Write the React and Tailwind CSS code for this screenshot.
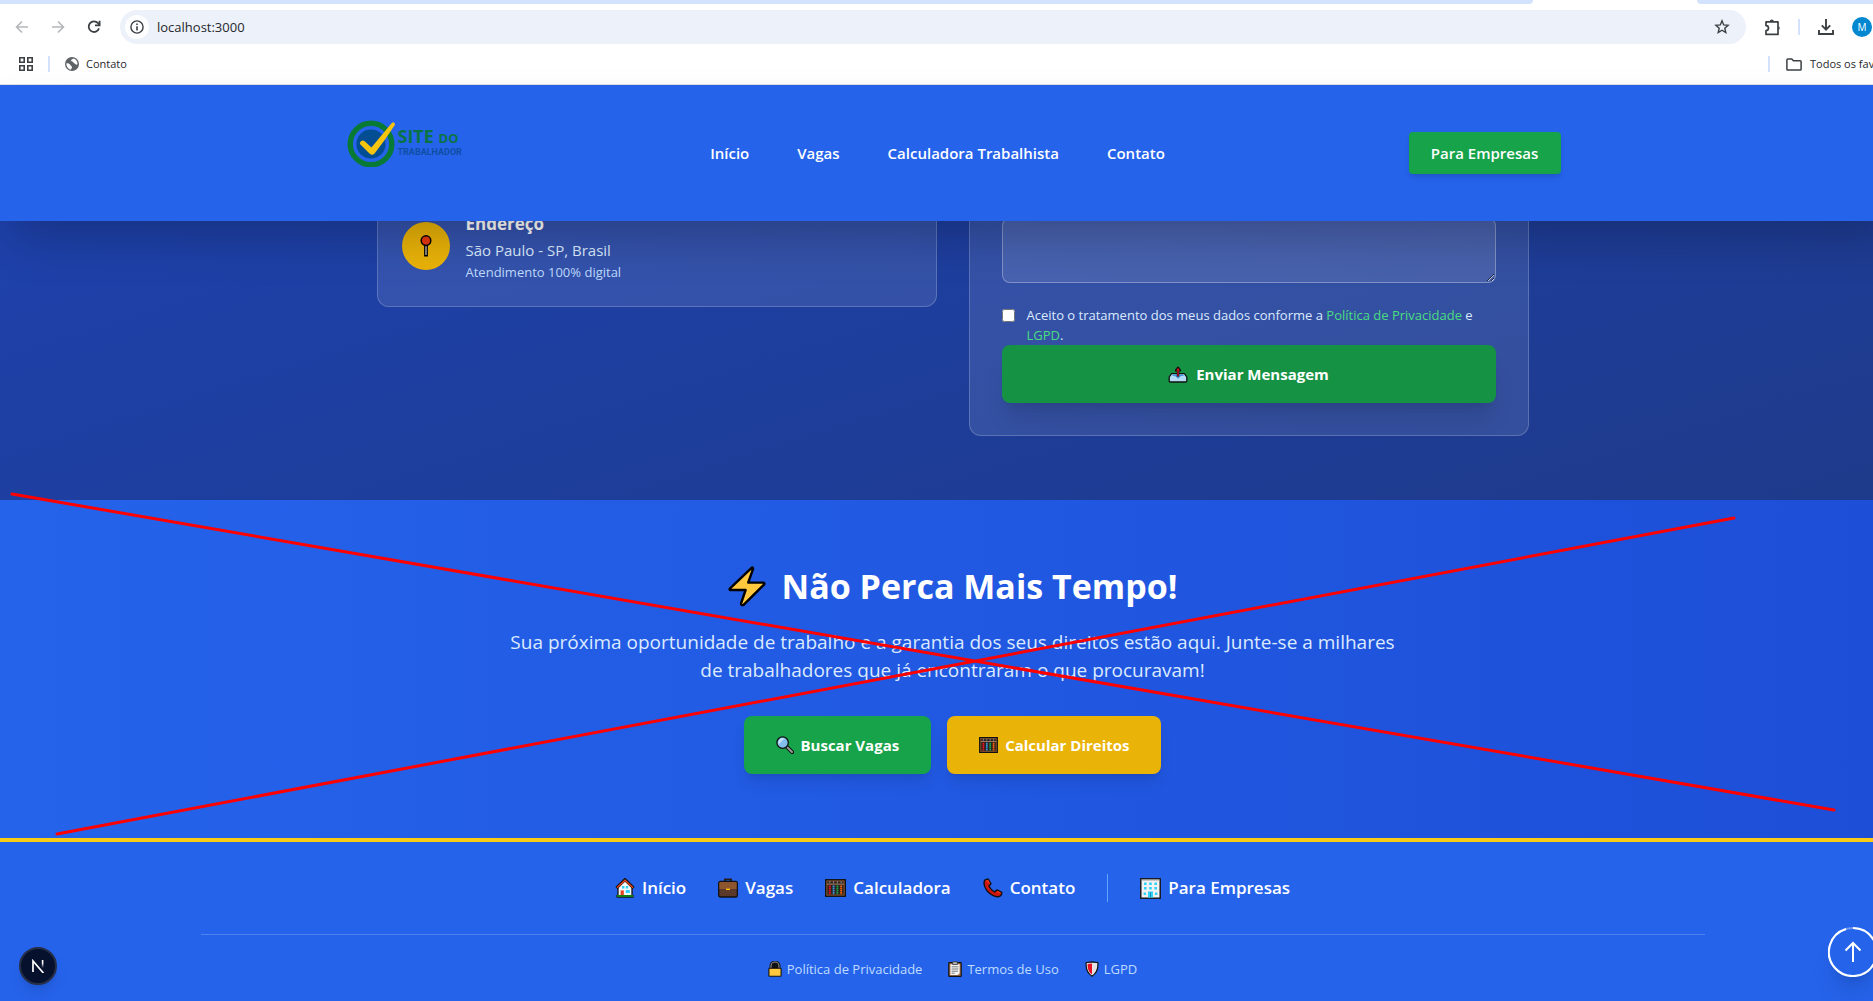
import React from "react";

/* ---------- toolbar icons ---------- */

const ArrowIcon = ({ flip }) => (
  <svg viewBox="0 0 14 14" className={flip ? "size-[14px] rotate-180" : "size-[14px]"} fill="none" stroke="#b4b6b8" strokeWidth="1.6" aria-hidden="true">
    <path d="M13 7H2M7 1.5 1.5 7 7 12.5" />
  </svg>
);

const ReloadIcon = () => (
  <svg viewBox="0 0 14 14" className="size-[14px]" fill="none" stroke="#3c4043" strokeWidth="1.8" aria-hidden="true">
    <path d="M12 8.4A5.3 5.3 0 1 1 11 3.2L12.4 5" />
    <path d="M12.6 0.8V5.4H8" />
  </svg>
);

const InfoIcon = () => (
  <svg viewBox="0 0 14 14" className="size-[14px]" fill="none" stroke="#3c4043" strokeWidth="1.4" aria-hidden="true">
    <circle cx="7" cy="7" r="6.1" />
    <path d="M7 6.2V10.4M7 3.6V5.1" strokeWidth="1.6" />
  </svg>
);

const StarIcon = () => (
  <svg viewBox="0 0 16 16" className="size-4" fill="none" stroke="#3c4043" strokeWidth="1.4" strokeLinejoin="miter" aria-hidden="true">
    <path d="M8 1.8 9.7 5.9 14.1 6.3 10.8 9.2 11.8 13.5 8 11.2 4.2 13.5 5.2 9.2 1.9 6.3 6.3 5.9Z" />
  </svg>
);

const PuzzleIcon = () => (
  <svg viewBox="0 0 17 17" className="size-[17px]" fill="none" aria-hidden="true">
    <path d="M2 2.8H14V15.4H2V11.6A2.4 2.4 0 0 0 2 6.6Z" stroke="#3c4043" strokeWidth="1.7" strokeLinejoin="round" />
    <path d="M5.8 2.4A2 2 0 0 1 9.8 2.4ZM14.4 7.2A2 2 0 0 1 14.4 11Z" fill="#3c4043" />
  </svg>
);

const DownloadIcon = () => (
  <svg viewBox="0 0 16 16" className="size-4" fill="none" stroke="#3c4043" strokeWidth="1.9" aria-hidden="true">
    <path d="M8 0V10.5M3.8 6.4 8 10.6 12.2 6.4M1 11V15H15V11" />
  </svg>
);

const AppsIcon = () => (
  <svg viewBox="0 0 14 14" className="size-[14px]" fill="none" stroke="#3c4043" strokeWidth="1.6" aria-hidden="true">
    <path d="M.8.8H5.2V5.2H.8ZM8.8.8H13.2V5.2H8.8ZM.8 8.8H5.2V13.2H.8ZM8.8 8.8H13.2V13.2H8.8Z" />
  </svg>
);

const GlobeIcon = () => (
  <svg viewBox="0 0 14 14" className="size-[14px]" aria-hidden="true">
    <circle cx="7" cy="7" r="7" fill="#5f6368" />
    <path d="M1.4 6.2C3 6 4.8 6.6 5.2 7.8S7 9.2 7 10.2 6 11.4 6.2 12.6C3 12.2 1.2 9.4 1.4 6.2ZM8 1.5C7.4 2.6 6 2.6 6 3.6S8 4.6 8.4 5.4 10.2 6.6 11 7.4 12.2 7.6 12.5 7C12.6 4 10.6 1.8 8 1.5Z" fill="#fff" />
  </svg>
);

const FolderIcon = () => (
  <svg viewBox="0 0 16 13" className="h-[13px] w-4" fill="none" stroke="#3c4043" strokeWidth="1.5" strokeLinejoin="round" aria-hidden="true">
    <path d="M.9 1.9Q.9.9 1.9.9H5.8L7.4 2.7H14.2Q15.1 2.7 15.1 3.6V11.2Q15.1 12.1 14.2 12.1H1.8Q.9 12.1.9 11.2Z" />
  </svg>
);

/* ---------- pictograms used in the page ---------- */

const Pin = () => (
  <svg viewBox="0 0 24 24" className="size-6" stroke="#000" aria-hidden="true">
    <path d="M10.8 11V21.8H13.2V11Z" fill="#fff" strokeWidth="1.4" />
    <circle cx="12" cy="6.6" r="4.8" fill="#e8380d" strokeWidth="1.5" />
  </svg>
);

const Outbox = () => (
  <svg viewBox="0 0 20 18" className="h-[18px] w-5" strokeLinejoin="round" aria-hidden="true">
    <path d="M1.2 12 3.6 8.6H16.4L18.8 12V15.8Q18.8 17 17.6 17H2.4Q1.2 17 1.2 15.8Z" fill="#b4dcf5" stroke="#111" strokeWidth="1.3" />
    <path d="M4 10.6 5 9.4H15L16 10.6 12.6 11.2 10 13.8 7.4 11.2Z" fill="#3a96dd" />
    <path d="M10 11.4V4.4M8 5.4 10 2.8 12 5.4Z" fill="#e81224" stroke="#111" strokeWidth="2.4" />
    <path d="M10 11.6V4.4" stroke="#e81224" strokeWidth="1.2" />
    <path d="M8.3 5.4 10 3.1 11.7 5.4Z" fill="#e81224" />
  </svg>
);

const Bolt = () => (
  <svg viewBox="0 0 38 41" className="h-[41px] w-[38px]" aria-hidden="true">
    <path d="M23.6 1.8 1.8 22.6Q1.2 23.8 2.6 24H17.6L13 37.6Q13 39.8 15.6 38.8L36.2 18.4Q36.8 16.8 35 16.6H20.2L25 3.2Q25.2 1 23.6 1.8Z" fill="#ffc83d" stroke="#000" strokeWidth="2.4" strokeLinejoin="round" />
  </svg>
);

const Magnifier = () => (
  <svg viewBox="0 0 18 18" className="size-[18px]" stroke="#111" aria-hidden="true">
    <path d="M10.6 10.6 16.2 16.2" strokeWidth="4" strokeLinecap="round" />
    <path d="M11.6 11.6 16 16" stroke="#9b9ca0" strokeWidth="2" strokeLinecap="round" />
    <circle cx="6.6" cy="6.6" r="5.7" fill="#83beec" strokeWidth="1.3" />
    <path d="M2.6 8.4A4.6 4.6 0 0 1 8.4 2.4Z" fill="#c5e4fa" stroke="none" />
  </svg>
);

const Abacus = ({ className }) => (
  <svg viewBox="0 0 20 17" className={className} fill="none" aria-hidden="true">
    <rect x=".7" y=".7" width="18.6" height="15.6" fill="#2b211d" stroke="#111" strokeWidth="1.4" />
    <rect x="1.8" y="1.8" width="16.4" height="13.4" stroke="#8e562e" strokeWidth="1" />
    <path d="M2 4.8H18" stroke="#b58a6a" strokeWidth=".9" />
    <g strokeWidth="1.8" strokeDasharray="1.6 .5">
      <path d="M4.6 6V14.8" stroke="#e81224" />
      <path d="M8.2 6V14.8" stroke="#3a96dd" />
      <path d="M11.8 6V14.8" stroke="#16a34a" />
      <path d="M15.4 6V14.8" stroke="#f7630c" />
    </g>
    <path d="M4.6 2V4M8.2 2V4M11.8 2V4M15.4 2V4" stroke="#9b9ca0" strokeWidth=".8" />
  </svg>
);

const House = () => (
  <svg viewBox="0 0 20 20" className="size-5" aria-hidden="true">
    <path d="M3 9V18.6H17V9L10 2Z" fill="#f5f5f5" stroke="#111" strokeWidth="1.3" />
    <path d="M1.4 10 10 1.6 18.6 10" fill="none" stroke="#111" strokeWidth="3" />
    <path d="M2 9.8 10 2.2 18 9.8" fill="none" stroke="#e8421f" strokeWidth="1.4" />
    <path d="M7 8H9.4V10.4H7ZM10.8 8H13.2V10.4H10.8ZM10.8 12H14.8V15H10.8Z" fill="#31d2f7" />
    <path d="M5.6 12.4H8.8V18H5.6Z" fill="#e8421f" />
    <path d="M1.4 18.3H18.6" stroke="#111" strokeWidth="2.6" />
    <path d="M2 18H18" stroke="#16c60c" strokeWidth="1.2" />
  </svg>
);

const Briefcase = () => (
  <svg viewBox="0 0 20 20" className="size-5" aria-hidden="true">
    <path d="M7 4V1.4H13V4" fill="none" stroke="#241a16" strokeWidth="1.8" />
    <rect x=".7" y="3.4" width="18.6" height="15.6" rx="1.6" fill="#5b3a2c" stroke="#111" strokeWidth="1.3" />
    <path d="M1.4 4.8Q1.4 4 2.4 4H17.6Q18.6 4 18.6 4.8V11H1.4Z" fill="#8e562e" />
    <path d="M8 11.3H12" stroke="#ffc400" strokeWidth="1.4" />
  </svg>
);

const Phone = () => (
  <svg viewBox="0 0 20 20" className="size-5" aria-hidden="true">
    <path d="M2 1.9 5.2 1 8 5.8 5.9 8Q7.6 11.8 11.6 14L14 11.9 18.8 14.4Q19 18.2 14.8 18.8 9.6 18.6 4.9 13.8.4 8 1.2 3.6Z" fill="#d3150f" stroke="#111" strokeWidth="1.4" strokeLinejoin="round" />
    <path d="M3 3.2 4.8 2.4 6.6 5.7M14.2 13.4 17.4 15" fill="none" stroke="#f03a17" strokeWidth="1.2" />
  </svg>
);

const Office = () => (
  <svg viewBox="0 0 21 21" className="size-[21px]" aria-hidden="true">
    <rect x=".8" y=".8" width="19.4" height="19.4" fill="#f2f2f2" stroke="#111" strokeWidth="1.4" />
    <path d="M1.4 2H19.6" stroke="#9b9ca0" />
    <path d="M4 4.4H6.6V7H4ZM9.2 4.4H11.8V7H9.2ZM14.4 4.4H17V7H14.4ZM4 9H6.6V11.6H4ZM9.2 9H11.8V11.6H9.2ZM14.4 9H17V11.6H14.4ZM3.6 14.4H6V17H3.6ZM15 14.4H17.4V17H15ZM8 13.4H13V19.5H8Z" fill="#31d2f7" />
    <path d="M10.5 14V19.5" stroke="#1492c8" />
  </svg>
);

const Lock = () => (
  <svg viewBox="0 0 14 16" className="h-4 w-[14px]" aria-hidden="true">
    <path d="M3 8V5A4 4 0 0 1 11 5V8" fill="#111" stroke="#111" strokeWidth="3" />
    <path d="M3 8V5A4 4 0 0 1 11 5V8" fill="#111" stroke="#8d8f93" strokeWidth="1.1" />
    <rect x=".9" y="7.2" width="12.2" height="8" rx=".8" fill="#ffc83d" stroke="#111" strokeWidth="1.1" />
  </svg>
);

const Clipboard = () => (
  <svg viewBox="0 0 14 16" className="h-4 w-[14px]" aria-hidden="true">
    <rect x=".8" y="1.6" width="12.4" height="13.8" rx=".6" fill="#a9744f" stroke="#111" strokeWidth="1.2" />
    <path d="M2.4 3.2H11.6V12.2L9.8 14H2.4Z" fill="#f4f4f4" />
    <path d="M4.6.9H9.4V3.4H4.6Z" fill="#c8c9cb" stroke="#333" strokeWidth=".9" />
    <path d="M3.6 5.8H10.4M3.6 8H10.4M3.6 10.2H10M3.6 12.2H6.6" stroke="#77787b" />
  </svg>
);

const Shield = () => (
  <svg viewBox="0 0 14 16" className="h-4 w-[14px]" aria-hidden="true">
    <path d="M7 .9C9 1.2 11 1.4 12.8 1.6 13.4 7.6 11.6 12.4 7 15.2 2.4 12.4.6 7.6 1.2 1.6 3 1.4 5 1.2 7 .9Z" fill="#e4e4e6" stroke="#111" strokeWidth="1.2" />
    <path d="M7 2.4C5.6 2.6 4 2.8 2.6 2.9 2.4 7.6 3.8 11.2 7 13.5Z" fill="#e81224" />
  </svg>
);

const Logo = () => (
  <a href="#inicio" aria-label="Site do Trabalhador" className="mb-5 flex w-[122px] items-center pl-[2px]">
    <svg viewBox="0 0 48 48" className="size-12 shrink-0" aria-hidden="true">
      <circle cx="24" cy="25" r="20.8" fill="none" stroke="#087a35" strokeWidth="5.4" />
      <circle cx="24" cy="25" r="14.6" fill="#034e93" />
      <path d="M13 23.4Q15 20 18 22.6L24.4 28.4 44.6 4.2Q47.6 1.8 48 5.8 38 21.4 27.6 34.4 24.8 37.2 22 34L13.4 25.6Q12.6 24.8 13 23.4Z" fill="#f7c410" />
    </svg>
    <span className="ml-[3px] flex flex-col font-bold">
      <span className="whitespace-nowrap text-[18px] leading-4 text-[#0a7345]">
        SITE <span className="text-[13px]">DO</span>
      </span>
      <span className="font-['Liberation_Sans_Narrow','Roboto',sans-serif] text-[9px] leading-3 text-[#0f4fa3]">TRABALHADOR</span>
    </span>
  </a>
);

/* ---------- browser frame ---------- */

function BrowserBar() {
  return (
    <div className="overflow-hidden border-b border-[#dfe1e5] bg-white text-[#27282b]">
      <div className="flex h-1 justify-between">
        <div className="w-[1533px] rounded-br-md bg-[#d3e3fd]" />
        <div className="w-44 rounded-bl-md bg-[#d3e3fd]" />
      </div>
      <div className="mt-[6px] flex h-[34px] items-center">
        <button type="button" aria-label="Voltar" className="ml-[15px]"><ArrowIcon /></button>
        <button type="button" aria-label="Avançar" className="ml-[22px]"><ArrowIcon flip /></button>
        <button type="button" aria-label="Recarregar" className="ml-[22px]"><ReloadIcon /></button>
        <div className="ml-[19px] flex h-full flex-1 items-center rounded-full bg-[#ecf1fa] pl-[5px] pr-4">
          <span className="flex size-6 items-center justify-center rounded-full bg-white"><InfoIcon /></span>
          <input aria-label="Endereço do site" defaultValue="localhost:3000" className="ml-2 min-w-0 flex-1 bg-transparent text-[13px] leading-5 outline-none" />
          <button type="button" aria-label="Adicionar aos favoritos"><StarIcon /></button>
        </div>
        <button type="button" aria-label="Extensões" className="ml-[18px]"><PuzzleIcon /></button>
        <span className="ml-[17px] h-4 w-[2px] bg-[#d3e3fd]" />
        <button type="button" aria-label="Downloads" className="ml-[18px]"><DownloadIcon /></button>
        <button type="button" aria-label="Perfil" className="ml-[18px] mr-[1px] flex size-5 items-center justify-center rounded-full bg-[#0288d1] text-[10px] text-white">M</button>
      </div>
      <div className="flex h-10 items-center text-[11px]">
        <button type="button" aria-label="Aplicativos" className="ml-[19px]"><AppsIcon /></button>
        <span className="ml-[15px] h-4 w-[2px] bg-[#d3e3fd]" />
        <a href="#contato" className="ml-[15px] flex items-center gap-[7px]"><GlobeIcon />Contato</a>
        <div className="ml-auto flex w-[105px] items-center whitespace-nowrap">
          <span className="h-4 w-[2px] shrink-0 bg-[#d3e3fd]" />
          <button type="button" className="ml-4 flex items-center gap-2"><FolderIcon />Todos os fav</button>
        </div>
      </div>
    </div>
  );
}

/* ---------- page ---------- */

function Header() {
  return (
    <header className="relative z-10 bg-[#2563eb] shadow-2xl">
      <div className="mx-auto flex h-[136px] max-w-7xl items-center justify-between px-8 text-[15px] text-white">
        <Logo />
        <nav className="flex gap-12 font-semibold">
          <a href="#inicio">Início</a>
          <a href="#vagas">Vagas</a>
          <a href="#calculadora">Calculadora Trabalhista</a>
          <a href="#contato">Contato</a>
        </nav>
        <button type="button" className="h-[42px] w-[152px] rounded bg-[#16a34a] font-semibold shadow-md">Para Empresas</button>
      </div>
    </header>
  );
}

function Contact() {
  return (
    <section id="contato" className="-mt-9 bg-linear-to-br/srgb from-[#1e44b8] to-[#1e3a8a] bg-[length:100%_600px] bg-bottom pb-16">
      <div className="mx-auto grid max-w-6xl grid-cols-2 items-start gap-8">
        <div className="flex items-center gap-4 rounded-xl border border-white/20 bg-white/10 p-6">
          <span className="flex size-12 shrink-0 items-center justify-center rounded-full bg-[#eab308]"><Pin /></span>
          <div>
            <h3 className="text-[17px] font-bold leading-7 text-white">Endereço</h3>
            <p className="text-[15px] leading-6 text-[#dbeafe]">São Paulo - SP, Brasil</p>
            <p className="text-[13px] leading-5 text-[#bfdbfe]">Atendimento 100% digital</p>
          </div>
        </div>
        <form className="rounded-xl border border-white/20 bg-white/10 p-8" onSubmit={(e) => e.preventDefault()}>
          <textarea aria-label="Mensagem" className="block h-[65px] w-full rounded-lg border border-white/30 bg-white/10 px-4 py-3 text-white" />
          <div className="mt-[22px] flex items-start gap-3 text-[13px] leading-5 text-[#dbeafe]">
            <input id="aceite" type="checkbox" className="mt-1 size-[13px] shrink-0" />
            <label htmlFor="aceite">
              Aceito o tratamento dos meus dados conforme a <a href="#privacidade" className="text-[#4ade80]">Política de Privacidade</a> e{" "}
              <a href="#lgpd" className="text-[#4ade80]">LGPD</a>.
            </label>
          </div>
          <button type="submit" className="flex h-[58px] w-full items-center justify-center gap-2 rounded-lg bg-[#159243] text-[15px] font-bold text-white shadow-xl">
            <Outbox />
            Enviar Mensagem
          </button>
        </form>
      </div>
    </section>
  );
}

function CallToAction() {
  return (
    <section className="relative bg-linear-to-r/srgb from-[#2563eb] to-[#1d4ed8] py-16 text-center text-white">
      <h2 className="flex h-11 items-center justify-center gap-4 text-[34px] font-bold leading-[44px]">
        <Bolt />
        Não Perca Mais Tempo!
      </h2>
      <p className="mx-auto mt-5 max-w-4xl text-[19px] leading-7 text-[#dbeafe]">
        Sua próxima oportunidade de trabalho e a garantia dos seus direitos estão aqui. Junte-se a milhares de trabalhadores que já encontraram o que procuravam!
      </p>
      <div className="mt-8 flex justify-center gap-4 text-[15px] font-bold">
        <a href="#vagas" className="flex h-[58px] items-center gap-[7px] rounded-lg bg-[#16a34a] px-8 shadow-lg">
          <Magnifier />
          Buscar Vagas
        </a>
        <a href="#calculadora" className="flex h-[58px] items-center gap-[7px] rounded-lg bg-[#eab308] px-8 shadow-lg">
          <Abacus className="h-4 w-[19px]" />
          Calcular Direitos
        </a>
      </div>
      <svg viewBox="0 0 1905 338" preserveAspectRatio="none" className="pointer-events-none absolute inset-0 size-full overflow-visible" fill="none" stroke="#f00" strokeWidth="3" strokeLinecap="round" aria-hidden="true">
        <path d="M12-6 1834 310M57 334 1734 18" />
      </svg>
    </section>
  );
}

function Footer() {
  return (
    <footer className="border-t-4 border-[#facc15] bg-[#2563eb] pb-16 pt-8 text-white">
      <div className="mx-auto max-w-[1536px] px-4">
        <nav className="flex h-7 items-center justify-center gap-8 text-[17px] font-semibold">
          <a href="#inicio" className="flex items-center gap-[7px]"><House />Início</a>
          <a href="#vagas" className="flex items-center gap-[7px]"><Briefcase />Vagas</a>
          <a href="#calculadora" className="flex items-center gap-[7px]"><Abacus className="h-[18px] w-[21px]" />Calculadora</a>
          <a href="#contato" className="flex items-center gap-[7px]"><Phone />Contato</a>
          <span className="h-7 w-px bg-[#60a5fa]" />
          <a href="#empresas" className="flex items-center gap-[7px]"><Office />Para Empresas</a>
        </nav>
        <div className="mt-8 flex items-center justify-center gap-[26px] border-t border-white/20 pt-6 text-[13px] leading-5 text-[#bfdbfe]">
          <a href="#privacidade" className="flex items-center gap-[5px]"><Lock />Política de Privacidade</a>
          <a href="#termos" className="flex items-center gap-[5px]"><Clipboard />Termos de Uso</a>
          <a href="#lgpd" className="flex items-center gap-[5px]"><Shield />LGPD</a>
        </div>
      </div>
    </footer>
  );
}

export default function App() {
  return (
    <div className="relative h-screen overflow-hidden bg-[#2563eb] font-['Open_Sans','Noto_Sans',sans-serif]">
      <BrowserBar />
      <div className="w-[calc(100%+32px)]">
        <Header />
        <Contact />
        <CallToAction />
        <Footer />
      </div>
      <button type="button" aria-label="Ferramentas de desenvolvimento" className="absolute bottom-4 left-[19px] flex size-[38px] items-center justify-center rounded-full border-2 border-[#262f45] bg-[#06122d] text-white shadow-lg">
        <svg viewBox="0 0 14 14" className="size-[14px]" fill="none" aria-hidden="true">
          <defs>
            <linearGradient id="fade" x1="0" y1="0" x2="0" y2="1">
              <stop offset=".4" stopColor="#fff" />
              <stop offset="1" stopColor="#fff" stopOpacity="0" />
            </linearGradient>
          </defs>
          <path d="M2 13V2L12.4 14" stroke="#fff" strokeWidth="1.7" />
          <rect x="10.8" y="1" width="1.6" height="8" fill="url(#fade)" />
        </svg>
      </button>
      <button type="button" aria-label="Voltar ao topo" className="absolute -right-[5px] bottom-6 rounded-full shadow-xl">
        <svg viewBox="0 0 50 50" className="size-[50px]" fill="none" aria-hidden="true">
          <circle cx="25" cy="25" r="24" stroke="#6f9bf2" strokeWidth="2" />
          <path d="M25 1A24 24 0 1 1 18 2" stroke="#fff" strokeWidth="2" />
          <path d="M25 35V16M17.5 23.5 25 16 32.5 23.5" stroke="#fff" strokeWidth="2" />
        </svg>
      </button>
    </div>
  );
}
